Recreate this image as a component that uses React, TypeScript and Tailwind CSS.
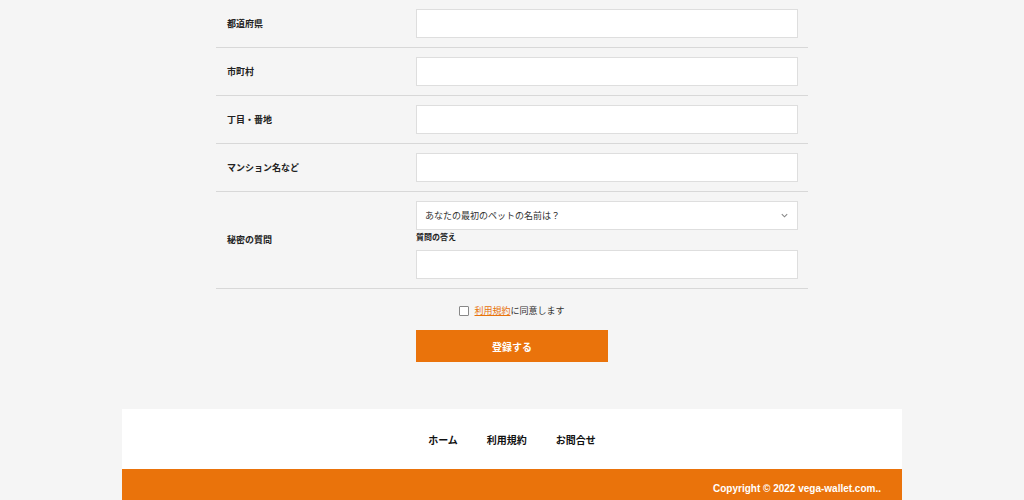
const font = "font-['Noto_Sans_CJK_JP','Noto_Sans',sans-serif]";

const Row = ({ label, children }: { label: string; children: React.ReactNode }) => (
  <div className="flex border-b border-[#d8d8d8]">
    <div className="w-[200px] flex items-center pl-[11px] text-[9px] font-bold text-[#222]">{label}</div>
    <div className="flex-1 pr-[10px] py-[9px]">{children}</div>
  </div>
);

const Input = () => (
  <div className="h-[29px] w-full bg-white border border-[#dedede]" />
);

export default function App() {
  return (
    <div className={`${font} bg-[#f5f5f5] min-h-[500px] flex flex-col items-center`}>
      <div className="w-[592px] flex flex-col">
        <Row label="都道府県">
          <Input />
        </Row>
        <Row label="市町村">
          <Input />
        </Row>
        <Row label="丁目・番地">
          <Input />
        </Row>
        <Row label="マンション名など">
          <Input />
        </Row>
        <Row label="秘密の質問">
          <div className="h-[29px] w-full bg-white border border-[#dedede] flex items-center justify-between pl-[8px] pr-[8px]">
            <span className="text-[9px] text-[#333]">あなたの最初のペットの名前は？</span>
            <svg width="9" height="9" viewBox="0 0 10 10" fill="none" stroke="#888" strokeWidth="1.2">
              <path d="M2 3.5 L5 6.5 L8 3.5" />
            </svg>
          </div>
          <div className="text-[8px] font-bold text-[#222] leading-[12px] mt-[1px] mb-[7px]">質問の答え</div>
          <Input />
        </Row>
        <div className="flex items-center justify-center gap-[5px] pt-[16px] leading-[12px]">
          <span className="w-[10px] h-[10px] border border-[#888] bg-white rounded-[1px]" />
          <span className="text-[9px] text-[#333]">
            <span className="text-[#e8730c] underline">利用規約</span>に同意します
          </span>
        </div>
        <div className="flex justify-center mt-[13px]">
          <button className="w-[192px] h-[32px] bg-[#ea730b] text-white text-[10px] font-bold">
            登録する
          </button>
        </div>
      </div>
      <div className="w-[780px] mt-[47px]">
        <div className="h-[60px] bg-white flex items-center justify-center gap-[29px] text-[10px] font-bold text-[#111]">
          <span>ホーム</span>
          <span>利用規約</span>
          <span>お問合せ</span>
        </div>
        <div className="h-[40px] bg-[#ea730b] flex justify-end pr-[21px] pt-[13px]">
          <span className="text-[10px] font-bold text-white leading-[14px] font-['Liberation_Sans',sans-serif]">Copyright © 2022 vega-wallet.com..</span>
        </div>
      </div>
    </div>
  );
}
